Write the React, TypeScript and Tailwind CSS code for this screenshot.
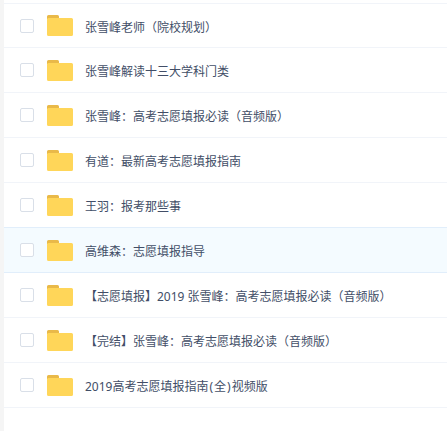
// App.tsx
import type { ReactNode } from "react"

const folders: { name: ReactNode; active?: boolean }[] = [
  { name: "张雪峰老师（院校规划）" },
  { name: "张雪峰解读十三大学科门类" },
  { name: "张雪峰：高考志愿填报必读（音频版）" },
  { name: "有道：最新高考志愿填报指南" },
  { name: "王羽：报考那些事" },
  { name: "高维森：志愿填报指导", active: true },
  { name: "【志愿填报】2019 张雪峰：高考志愿填报必读（音频版）" },
  { name: "【完结】张雪峰：高考志愿填报必读（音频版）" },
  {
    name: (
      <>
        2019高考志愿填报指南<span className="mx-px">(</span>全<span className="mx-px">)</span>视频版
      </>
    ),
  },
]

function FolderIcon() {
  return (
    <svg width="26" height="21" viewBox="0 0 26 21" className="shrink-0">
      <path d="M0 1.5A1.5 1.5 0 0 1 1.5 0h9A1.5 1.5 0 0 1 12 1.5V4H0z" fill="#e9b949" />
      <path d="M0 4.5A1.5 1.5 0 0 1 1.5 3h23A1.5 1.5 0 0 1 26 4.5v15a1.5 1.5 0 0 1-1.5 1.5h-23A1.5 1.5 0 0 1 0 19.5z" fill="#ffd659" />
    </svg>
  )
}

export default function App() {
  return (
    <div className="h-[431px] w-[447px] overflow-hidden bg-[#f5f5f5] pl-[4px] font-['Noto_Sans','Noto_Sans_CJK_SC',sans-serif]">
      <div className="h-full bg-white pt-[3px]">
        <div className="border-t border-[#f1f4f9]">
          {folders.map((folder, i) => (
            <div
              key={i}
              className={
                folder.active
                  ? "-mt-px flex h-[46px] items-center border-y border-[#e1eefb] bg-[#f4fbff] pl-[16px]"
                  : i === 0
                    ? "flex h-[44px] items-center border-b border-[#f1f4f9] pl-[16px]"
                    : "flex h-[45px] items-center border-b border-[#f1f4f9] pl-[16px]"
              }
            >
              <div className="h-[14px] w-[14px] shrink-0 rounded-[2px] border border-[#d9dfe8] bg-white"></div>
              <div className="ml-[13px]">
                <FolderIcon />
              </div>
              <span className="ml-[12px] whitespace-nowrap pt-[4px] text-[12px] text-[#424e67]">{folder.name}</span>
            </div>
          ))}
        </div>
      </div>
    </div>
  )
}
